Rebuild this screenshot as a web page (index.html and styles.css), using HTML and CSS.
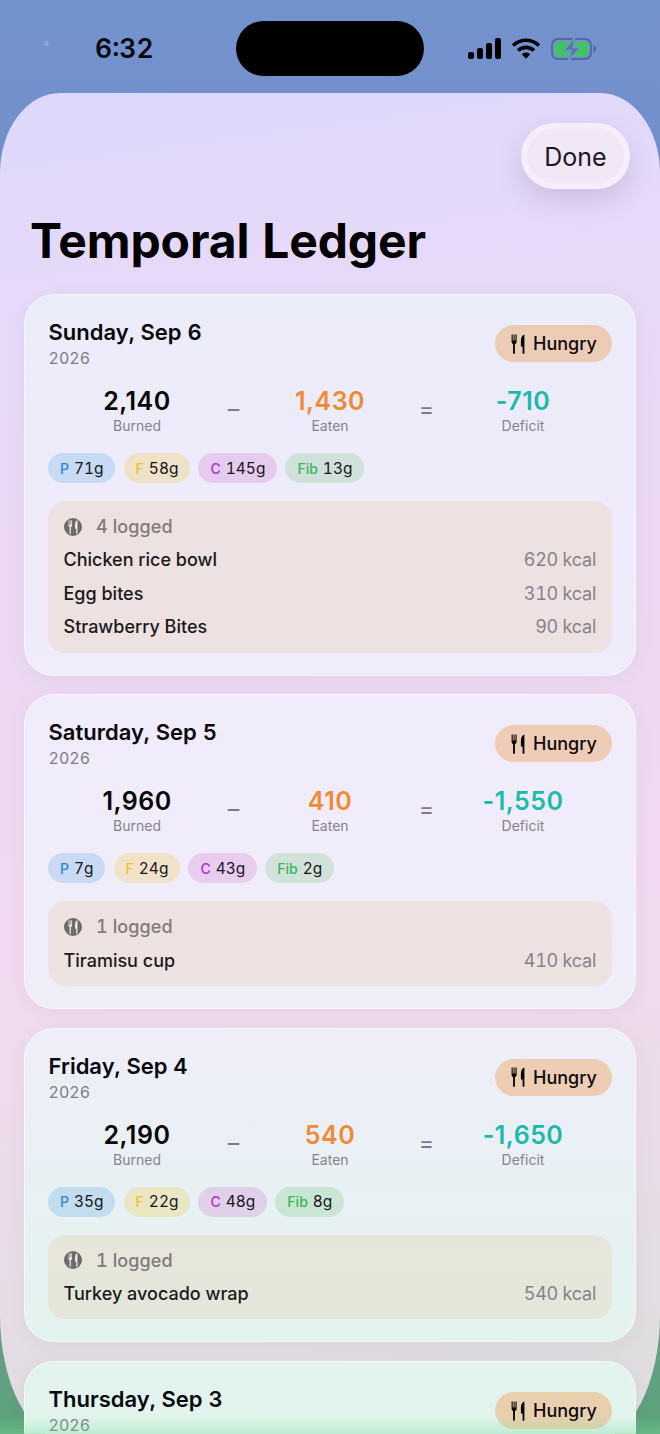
FILE: index.html
```html
<!doctype html>
<html>
<head>
  <title>Temporal Ledger</title>
  <link rel="stylesheet" href="styles.css">
</head>
<body>
  <svg class="defs" width="0" height="0">
    <symbol id="cutlery" viewBox="0 0 14 20">
      <path d="M0.6 0.4h1.1v6.200h0.9v-6.200h1v6.200h0.9v-6.200h1.100v7.200c0 1.300-0.700 2.200-1.700 2.500v9c0 0.500-0.400 0.900-0.900 0.900s-0.900-0.400-0.900-0.900v-9C1.300 9.800 0.600 8.900 0.600 7.600z"/>
      <path d="M13.400 0.400v18.700c0 0.500-0.400 0.900-0.900 0.900s-0.900-0.400-0.900-0.900v-6.600h-1.700V6.500c0-3 1.300-5.300 3.500-6.100z"/>
    </symbol>
  </svg>
  <div class="phone">
    <header class="status">
      <span class="dot"></span>
      <span class="time">6:32</span>
      <span class="island"></span>
      <span class="status-icons">
        <svg width="33" height="21" viewBox="0 0 33 21"><rect x="0" y="14" width="6" height="7" rx="2"/><rect x="9" y="10" width="6" height="11" rx="2"/><rect x="18" y="5" width="6" height="16" rx="2"/><rect x="27" y="0" width="6" height="21" rx="2"/></svg>
        <svg width="28" height="21" viewBox="0 0 28 21"><path d="M1 7.500C8.500 0.500 19.500 0.500 27 7.500" fill="none" stroke="#000" stroke-width="3.600"/><path d="M6 12.500C10.800 8.300 17.200 8.300 22 12.500" fill="none" stroke="#000" stroke-width="3.600"/><path d="M9.800 16.200C12.500 13.800 15.500 13.800 18.200 16.200L14 20.800z"/></svg>
        <svg width="46" height="24" viewBox="0 0 46 24">
          <rect x="1" y="2" width="39" height="20" rx="6" fill="none" stroke="#4f6a96" stroke-width="1.800"/>
          <path d="M42.500 8.500c1.800 0.400 2.500 1.800 2.500 3.500s-0.700 3.100-2.500 3.500z" fill="#4f6a96"/>
          <rect x="4" y="5" width="33" height="14" rx="3" fill="#3dc65c"/>
          <path d="M24 0L13 13.500h7L17.500 24 29 10.500h-7z" fill="#5874a8" stroke="#7393cf" stroke-width="1.500"/>
        </svg>
      </span>
    </header>

    <main class="sheet">
      <div class="sheet-top">
        <button class="done"><span>Done</span></button>
      </div>
      <h1>Temporal Ledger</h1>

      <section class="card">
        <div class="card-head">
          <div>
            <div class="date">Sunday, Sep 6</div>
            <div class="year">2026</div>
          </div>
          <span class="mood"><svg width="14" height="20"><use href="#cutlery"/></svg>Hungry</span>
        </div>
        <div class="stats">
          <div class="stat"><b>2,140</b><small>Burned</small></div>
          <span class="op">–</span>
          <div class="stat eaten"><b>1,430</b><small>Eaten</small></div>
          <span class="op">=</span>
          <div class="stat deficit"><b>-710</b><small>Deficit</small></div>
        </div>
        <div class="chips">
          <span class="chip p"><i>P</i>71g</span>
          <span class="chip f"><i>F</i>58g</span>
          <span class="chip c"><i>C</i>145g</span>
          <span class="chip fib"><i>Fib</i>13g</span>
        </div>
        <div class="log">
          <div class="log-head"><span class="log-icon"><svg width="10" height="14"><use href="#cutlery"/></svg></span>4 logged</div>
          <div class="log-row"><span>Chicken rice bowl</span><em>620 kcal</em></div>
          <div class="log-row"><span>Egg bites</span><em>310 kcal</em></div>
          <div class="log-row"><span>Strawberry Bites</span><em>90 kcal</em></div>
        </div>
      </section>

      <section class="card">
        <div class="card-head">
          <div>
            <div class="date">Saturday, Sep 5</div>
            <div class="year">2026</div>
          </div>
          <span class="mood"><svg width="14" height="20"><use href="#cutlery"/></svg>Hungry</span>
        </div>
        <div class="stats">
          <div class="stat"><b>1,960</b><small>Burned</small></div>
          <span class="op">–</span>
          <div class="stat eaten"><b>410</b><small>Eaten</small></div>
          <span class="op">=</span>
          <div class="stat deficit"><b>-1,550</b><small>Deficit</small></div>
        </div>
        <div class="chips">
          <span class="chip p"><i>P</i>7g</span>
          <span class="chip f"><i>F</i>24g</span>
          <span class="chip c"><i>C</i>43g</span>
          <span class="chip fib"><i>Fib</i>2g</span>
        </div>
        <div class="log">
          <div class="log-head"><span class="log-icon"><svg width="10" height="14"><use href="#cutlery"/></svg></span>1 logged</div>
          <div class="log-row"><span>Tiramisu cup</span><em>410 kcal</em></div>
        </div>
      </section>

      <section class="card">
        <div class="card-head">
          <div>
            <div class="date">Friday, Sep 4</div>
            <div class="year">2026</div>
          </div>
          <span class="mood"><svg width="14" height="20"><use href="#cutlery"/></svg>Hungry</span>
        </div>
        <div class="stats">
          <div class="stat"><b>2,190</b><small>Burned</small></div>
          <span class="op">–</span>
          <div class="stat eaten"><b>540</b><small>Eaten</small></div>
          <span class="op">=</span>
          <div class="stat deficit"><b>-1,650</b><small>Deficit</small></div>
        </div>
        <div class="chips">
          <span class="chip p"><i>P</i>35g</span>
          <span class="chip f"><i>F</i>22g</span>
          <span class="chip c"><i>C</i>48g</span>
          <span class="chip fib"><i>Fib</i>8g</span>
        </div>
        <div class="log">
          <div class="log-head"><span class="log-icon"><svg width="10" height="14"><use href="#cutlery"/></svg></span>1 logged</div>
          <div class="log-row"><span>Turkey avocado wrap</span><em>540 kcal</em></div>
        </div>
      </section>

      <section class="card">
        <div class="card-head">
          <div>
            <div class="date">Thursday, Sep 3</div>
            <div class="year">2026</div>
          </div>
          <span class="mood"><svg width="14" height="20"><use href="#cutlery"/></svg>Hungry</span>
        </div>
      </section>
    </main>
    <div class="bottom-tint"></div>
  </div>
</body>
</html>
```

FILE: styles.css
```css
* { box-sizing: border-box; }

html, body {
  margin: 0;
  padding: 0;
}

body {
  font-family: Inter, "Liberation Sans", sans-serif;
  font-variant-numeric: tabular-nums;
  color: #0b0b0f;
}

.defs { position: absolute; }

.phone {
  position: relative;
  width: 660px;
  height: 1434px;
  overflow: hidden;
  background: linear-gradient(180deg, #7393cf 0, #7290cc 100px, #7f8ec0 500px, #6a9c96 1200px, #5da27a 1434px);
}

/* status bar */
.status {
  position: relative;
  height: 93px;
  padding: 21px 0 0 44px;
  display: flex;
  align-items: flex-start;
}
.dot {
  width: 5px;
  height: 5px;
  margin-top: 20px;
  border-radius: 50%;
  background: #8fa6d2;
}
.time {
  width: 141px;
  margin-left: 46px;
  font-size: 26.500px;
  line-height: 55px;
  font-weight: 600;
  color: #08090f;
}
.island {
  width: 188px;
  height: 55px;
  border-radius: 28px;
  background: #000;
}
.status-icons {
  margin-left: 44px;
  height: 55px;
  display: flex;
  align-items: center;
  gap: 11px;
}

/* sheet */
.sheet {
  height: 1347px;
  padding: 0 24px;
  border-radius: 60px 60px 66px 66px / 80px 80px 125px 125px;
  background: linear-gradient(172deg, #ddd8fb 0, #e6d9f9 200px, #ecd8f3 520px, #f1daf1 860px, #ebdcea 1100px, #dfdde0 1323px);
}
.sheet-top {
  height: 96px;
  padding: 30px 6px 0 0;
  display: flex;
  justify-content: flex-end;
}
.done {
  width: 109px;
  height: 66px;
  padding: 6px;
  border: 0;
  border-radius: 33px;
  background: #f7eefb;
  box-shadow: 0 12px 26px rgba(110, 90, 140, .2);
  font: inherit;
}
.done span {
  display: block;
  height: 100%;
  border-radius: 27px;
  background: #f1e7f6;
  font-size: 25px;
  line-height: 56px;
  color: #1c1626;
}
h1 {
  margin: 0 0 0 6px;
  height: 105px;
  font-size: 48px;
  line-height: 104px;
  font-weight: 700;
  letter-spacing: -.1px;
  color: #000;
}

/* day card */
.card {
  margin-bottom: 18.900px;
  padding: 24px 23px 22px;
  border: 1.500px solid rgba(255, 255, 255, .55);
  border-radius: 30px;
  background: linear-gradient(180deg, #ebecfa 300px, #efebfb 520px, #f1ecfb 800px, #eeeef8 1040px, #e3f3ef 1340px, #e2f4ec 1434px) fixed;
  box-shadow: 0 4px 18px rgba(120, 100, 130, .07);
}
.card-head {
  display: flex;
  justify-content: space-between;
  align-items: flex-start;
}
.date {
  padding-left: 0.500px;
  font-size: 22px;
  line-height: 27px;
  font-weight: 600;
  color: #08080c;
}
.year {
  margin-top: 1px;
  padding-left: 0.500px;
  font-size: 16px;
  line-height: 23px;
  color: #7d7c85;
}
.mood {
  height: 37px;
  width: 117px;
  margin-top: 6px;
  padding-left: 16px;
  display: flex;
  align-items: center;
  gap: 8px;
  border-radius: 19px;
  background: rgba(238, 172, 111, .5);
  font-size: 18px;
  font-weight: 500;
  color: #0c0a0a;
}

.stats {
  margin-top: 16px;
  display: grid;
  grid-template-columns: 1fr 15px 1fr 15px 1fr;
  text-align: center;
}
.stat b {
  display: block;
  font-size: 25px;
  line-height: 31px;
  font-weight: 600;
  font-variant-numeric: normal;
  letter-spacing: .5px;
  color: #050507;
}
.stat small {
  display: block;
  font-size: 14px;
  line-height: 18px;
  color: #85838d;
}
.stat.eaten b { color: #f08a35; }
.stat.deficit b { color: #1cb9ad; }
.op {
  font-size: 23px;
  line-height: 46px;
  color: #7c7b85;
}

.chips {
  margin-top: 18px;
  display: flex;
  gap: 8.500px;
}
.chip {
  height: 30px;
  padding: 0 11.500px 0 12px;
  display: flex;
  align-items: center;
  gap: 5px;
  border-radius: 15px;
  font-size: 15.500px;
  color: #17171b;
}
.chip i {
  font-style: normal;
  font-size: 14px;
  font-weight: 500;
}
.chip.p { background: rgba(45, 146, 215, .2); }
.chip.p i { color: #2a85f0; }
.chip.f { background: rgba(245, 190, 5, .2); }
.chip.f i { color: #f0c030; }
.chip.c { background: rgba(195, 80, 190, .2); }
.chip.c i { color: #b52fd8; }
.chip.fib { background: rgba(85, 185, 90, .2); }
.chip.fib i { color: #34b85a; }

.log {
  margin-top: 18px;
  padding: 9px 16px 9px 15px;
  border-radius: 18px;
  background: rgba(228, 184, 131, .2);
}
.log-head {
  height: 33px;
  display: flex;
  align-items: center;
  gap: 14px;
  padding-left: 1px;
  font-size: 18px;
  font-weight: 500;
  letter-spacing: .1px;
  color: #7f7a7c;
}
.log-icon {
  width: 18px;
  height: 18px;
  display: flex;
  align-items: center;
  justify-content: center;
  border-radius: 50%;
  background: #6f6a6d;
  fill: #f2e6e6;
}
.log-row {
  height: 33.500px;
  display: flex;
  justify-content: space-between;
  align-items: center;
  font-size: 18px;
  font-weight: 500;
  color: #1a191c;
}
.log-row span { padding-left: 0.500px; }
.log-row em {
  font-style: normal;
  font-weight: 400;
  letter-spacing: -.25px;
  color: #86828a;
}

.bottom-tint {
  position: absolute;
  left: 0;
  right: 0;
  bottom: 0;
  height: 18px;
  background: linear-gradient(180deg, rgba(120, 225, 160, 0), rgba(120, 225, 160, .35));
  pointer-events: none;
}
```
